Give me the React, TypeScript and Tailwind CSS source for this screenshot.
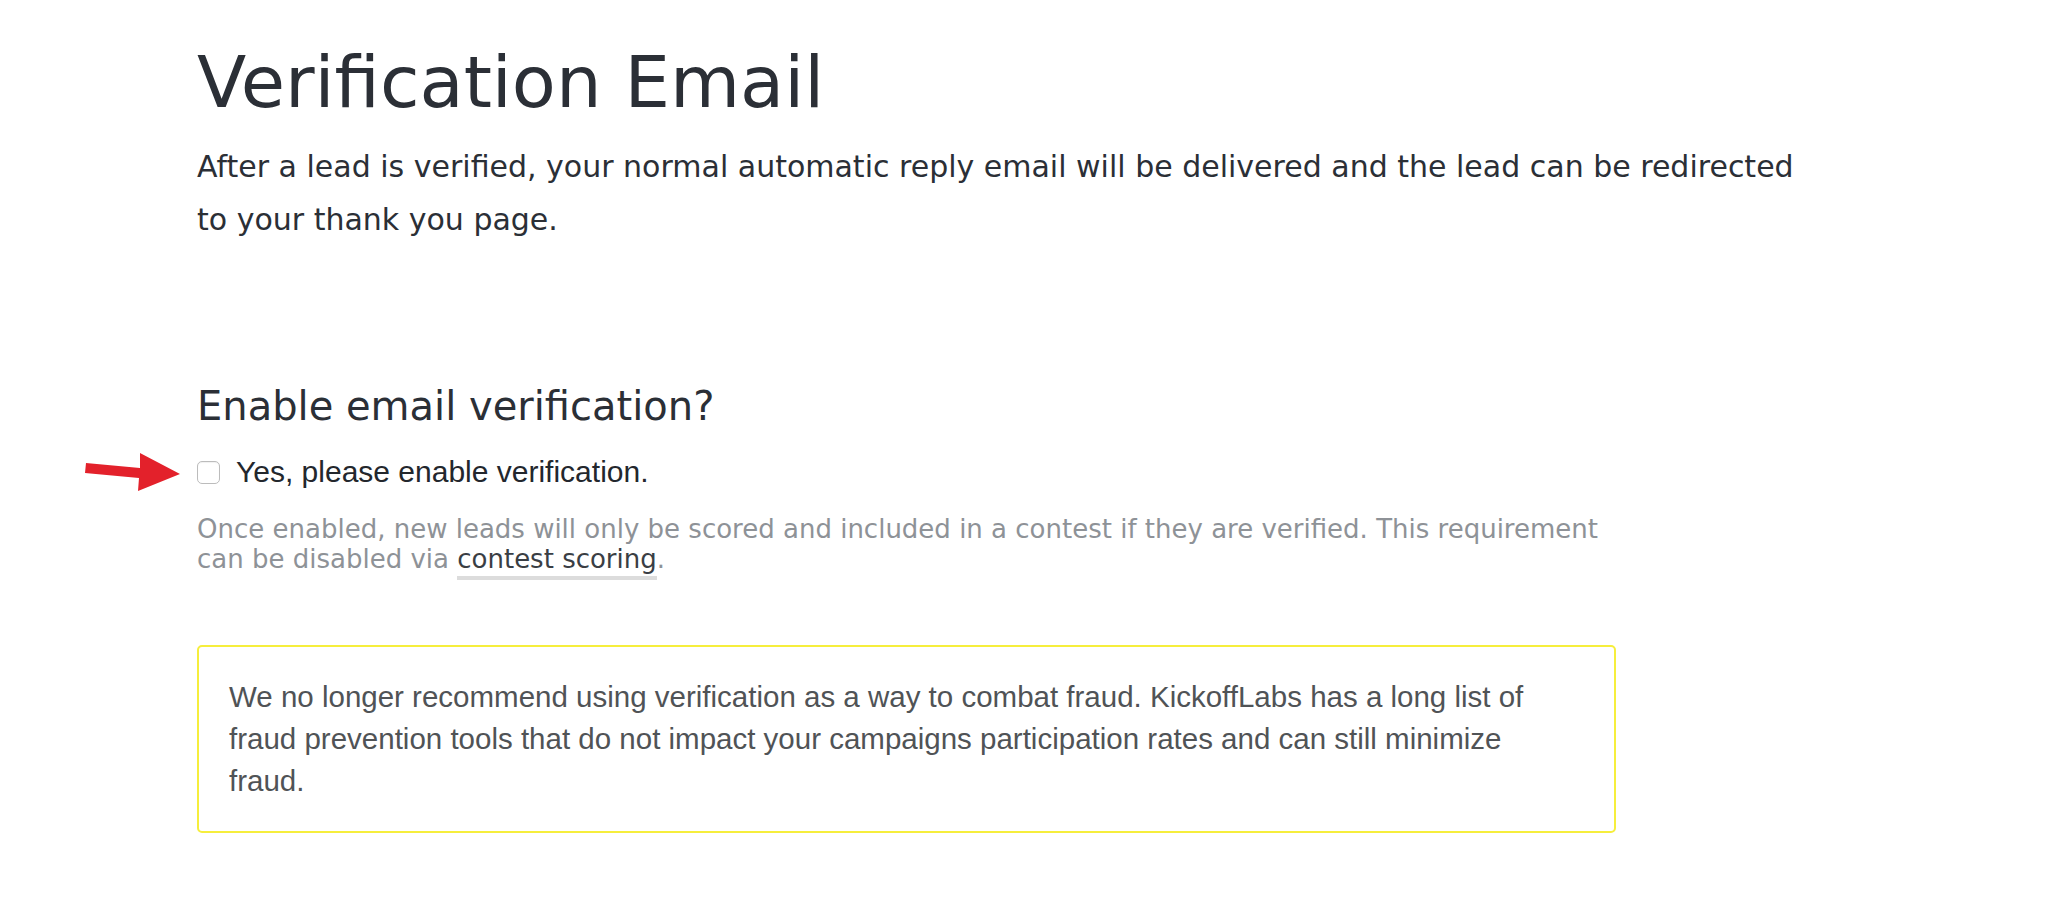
import React from 'react'

const verdana = "font-['DejaVu_Sans',Verdana,sans-serif]"
const helvetica = "font-['Liberation_Sans',Helvetica,Arial,sans-serif]"

function PointerArrow() {
  return (
    <svg
      className="absolute left-[-112px] top-[-2px] h-[40px] w-[96px]"
      viewBox="0 0 96 40"
      aria-hidden="true"
    >
      <polygon points="1,11 55,16 55,1 95,22 53,39 54,26 0,21" fill="#e3212b" />
    </svg>
  )
}

export default function App() {
  return (
    <div className="min-h-screen bg-white">
      <div className="ml-[197px] w-[1625px] pt-[40px] pb-[70px]">
        {/* Header */}
        <h1 className={`${verdana} text-[72px] leading-[85px] font-normal text-[#2b2f36]`}>
          Verification Email
        </h1>
        <p className={`${verdana} mt-[15px] text-[30px] leading-[53px] text-[#2b2f36]`}>
          After a lead is verified, your normal automatic reply email will be delivered and the lead can be redirected
          to your thank you page.
        </p>

        {/* Verification setting */}
        <section className="mt-[136px] w-[1419px]">
          <h2 className={`${verdana} text-[40px] leading-[48px] font-normal text-[#2b2f36]`}>
            Enable email verification?
          </h2>

          <label className="relative mt-[24px] flex items-center gap-[16px]">
            <PointerArrow />
            <input
              type="checkbox"
              className="h-[23px] w-[23px] shrink-0 appearance-none rounded-[5px] border border-[#bcbcbc] bg-white shadow-[inset_0_1px_1px_rgba(0,0,0,0.06)]"
            />
            <span className={`${helvetica} text-[30px] leading-[36px] text-[#23272d]`}>
              Yes, please enable verification.
            </span>
          </label>

          <p className={`${verdana} mt-[24px] text-[26px] leading-[30px] text-[#8e9297]`}>
            Once enabled, new leads will only be scored and included in a contest if they are verified. This requirement
            can be disabled via{' '}
            <span className="border-b-[4px] border-[#dcdcdc] pb-[2px] text-[#3a3e44]">contest scoring</span>.
          </p>

          {/* Notice */}
          <div className="mt-[71px] rounded-[5px] border-2 border-[#f6ee3c] px-[30px] pt-[29px] pb-[29px]">
            <p className={`${helvetica} text-[29.5px] leading-[42px] text-[#505356]`}>
              We no longer recommend using verification as a way to combat fraud. KickoffLabs has a long list of fraud
              prevention tools that do not impact your campaigns participation rates and can still minimize fraud.
            </p>
          </div>
        </section>
      </div>
    </div>
  )
}
